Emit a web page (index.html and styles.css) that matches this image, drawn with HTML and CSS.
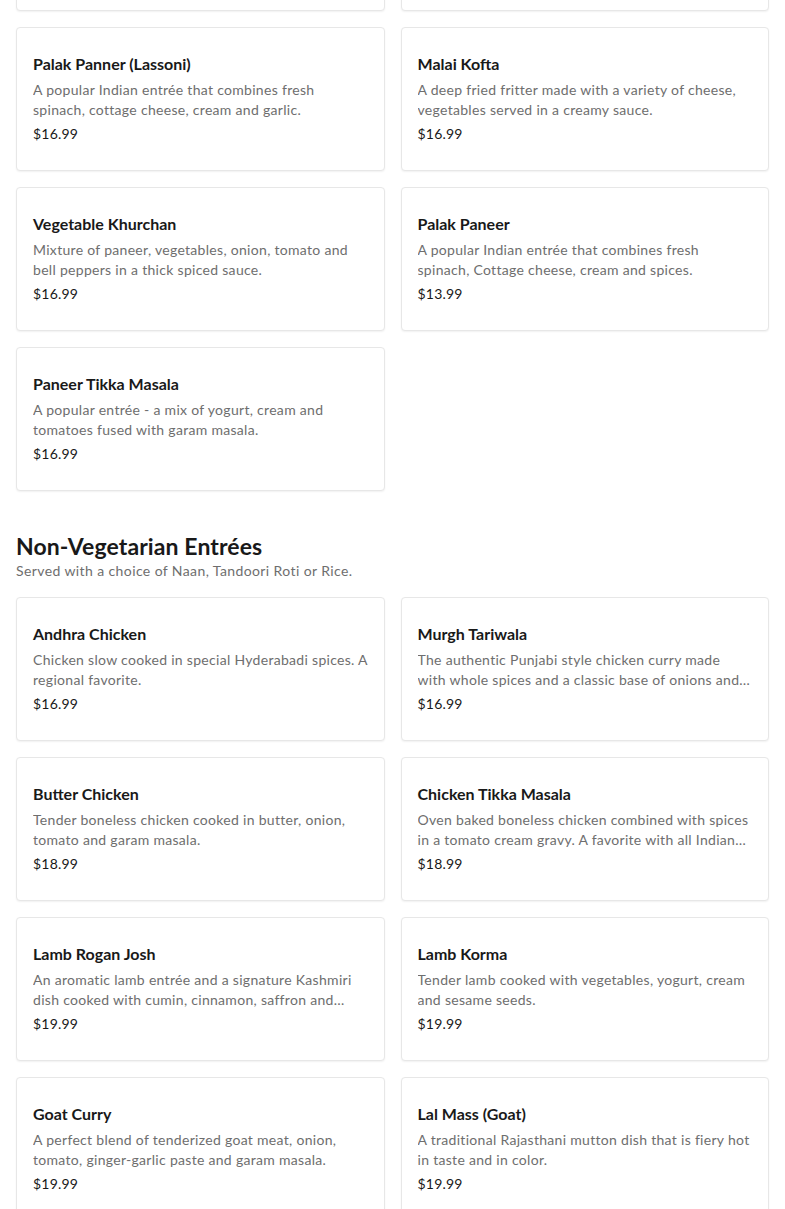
FILE: index.html
```html
<!DOCTYPE html>
<html lang="en">
<head>
<meta charset="utf-8">
<title>Menu</title>
<link rel="stylesheet" href="styles.css">
</head>
<body>
<main class="menu">
  <section class="section section-first">
    <div class="grid">
      <article class="card"><h3 class="card-title">Shahi Paneer</h3><p class="card-desc">Cottage cheese cooked in a rich creamy sauce with cashews and mild spices.</p><p class="card-price">$16.99</p></article>
      <article class="card"><h3 class="card-title">Navratan Korma</h3><p class="card-desc">Mixed vegetables cooked in a mild creamy sauce with nuts and raisins.</p><p class="card-price">$16.99</p></article>
      <article class="card"><h3 class="card-title">Palak Panner (Lassoni)</h3><p class="card-desc">A popular Indian entrée that combines fresh spinach, cottage cheese, cream and garlic.</p><p class="card-price">$16.99</p></article>
      <article class="card"><h3 class="card-title">Malai Kofta</h3><p class="card-desc">A deep fried fritter made with a variety of cheese, vegetables served in a creamy sauce.</p><p class="card-price">$16.99</p></article>
      <article class="card"><h3 class="card-title">Vegetable Khurchan</h3><p class="card-desc">Mixture of paneer, vegetables, onion, tomato and bell peppers in a thick spiced sauce.</p><p class="card-price">$16.99</p></article>
      <article class="card"><h3 class="card-title">Palak Paneer</h3><p class="card-desc">A popular Indian entrée that combines fresh spinach, Cottage cheese, cream and spices.</p><p class="card-price">$13.99</p></article>
      <article class="card"><h3 class="card-title">Paneer Tikka Masala</h3><p class="card-desc">A popular entrée - a mix of yogurt, cream and tomatoes fused with garam masala.</p><p class="card-price">$16.99</p></article>
    </div>
  </section>
  <section class="section">
    <header class="section-head">
      <h2 class="section-title">Non-Vegetarian Entrées</h2>
      <p class="section-sub">Served with a choice of Naan, Tandoori Roti or Rice.</p>
    </header>
    <div class="grid">
      <article class="card"><h3 class="card-title">Andhra Chicken</h3><p class="card-desc">Chicken slow cooked in special Hyderabadi spices. A regional favorite.</p><p class="card-price">$16.99</p></article>
      <article class="card"><h3 class="card-title">Murgh Tariwala</h3><p class="card-desc">The authentic Punjabi style chicken curry made with whole spices and a classic base of onions and tomatoes.</p><p class="card-price">$16.99</p></article>
      <article class="card"><h3 class="card-title">Butter Chicken</h3><p class="card-desc">Tender boneless chicken cooked in butter, onion, tomato and garam masala.</p><p class="card-price">$18.99</p></article>
      <article class="card"><h3 class="card-title">Chicken Tikka Masala</h3><p class="card-desc">Oven baked boneless chicken combined with spices in a tomato cream gravy. A favorite with all Indian food lovers.</p><p class="card-price">$18.99</p></article>
      <article class="card"><h3 class="card-title">Lamb Rogan Josh</h3><p class="card-desc">An aromatic lamb entrée and a signature Kashmiri dish cooked with cumin, cinnamon, saffron and cardamom.</p><p class="card-price">$19.99</p></article>
      <article class="card"><h3 class="card-title">Lamb Korma</h3><p class="card-desc">Tender lamb cooked with vegetables, yogurt, cream and sesame seeds.</p><p class="card-price">$19.99</p></article>
      <article class="card"><h3 class="card-title">Goat Curry</h3><p class="card-desc">A perfect blend of tenderized goat meat, onion, tomato, ginger-garlic paste and garam masala.</p><p class="card-price">$19.99</p></article>
      <article class="card"><h3 class="card-title">Lal Mass (Goat)</h3><p class="card-desc">A traditional Rajasthani mutton dish that is fiery hot in taste and in color.</p><p class="card-price">$19.99</p></article>
    </div>
  </section>
</main>
</body>
</html>
```

FILE: styles.css
```css
* { box-sizing: border-box; }
html, body { margin: 0; padding: 0; background: #ffffff; }
body {
  font-family: Lato, "Liberation Sans", Arial, sans-serif;
  color: #191919;
  overflow: hidden;
}
.menu {
  padding: 0 16px;
  margin-top: -133px;
}
.section + .section { margin-top: 41px; }
.section-head { margin-bottom: 16px; }
.section-title {
  margin: 0;
  font-size: 23px;
  line-height: 28px;
  font-weight: 700;
  letter-spacing: 0.1px;
  color: #191919;
}
.section-sub {
  margin: 1px 0 0;
  font-size: 14px;
  line-height: 20px;
  letter-spacing: 0.4px;
  color: #6e6e6e;
}
.grid {
  display: grid;
  grid-template-columns: 1fr 1fr;
  gap: 16px;
}
.card {
  border: 1px solid #e7e7e7;
  border-radius: 4px;
  box-shadow: 0 1px 2px rgba(0,0,0,0.06);
  padding: 26px 16px;
  background: #fff;
  height: 144px;
}
.card-title {
  margin: 0;
  font-size: 16px;
  line-height: 20px;
  font-weight: 700;
  color: #191919;
}
.card-desc {
  margin: 6px 0 0;
  font-size: 14px;
  line-height: 20px;
  letter-spacing: 0.3px;
  color: #6e6e6e;
  max-height: 40px;
  display: -webkit-box;
  -webkit-line-clamp: 2;
  -webkit-box-orient: vertical;
  overflow: hidden;
}
.card-price {
  margin: 4px 0 0;
  font-size: 14px;
  line-height: 20px;
  letter-spacing: 0.2px;
  color: #191919;
}
```
